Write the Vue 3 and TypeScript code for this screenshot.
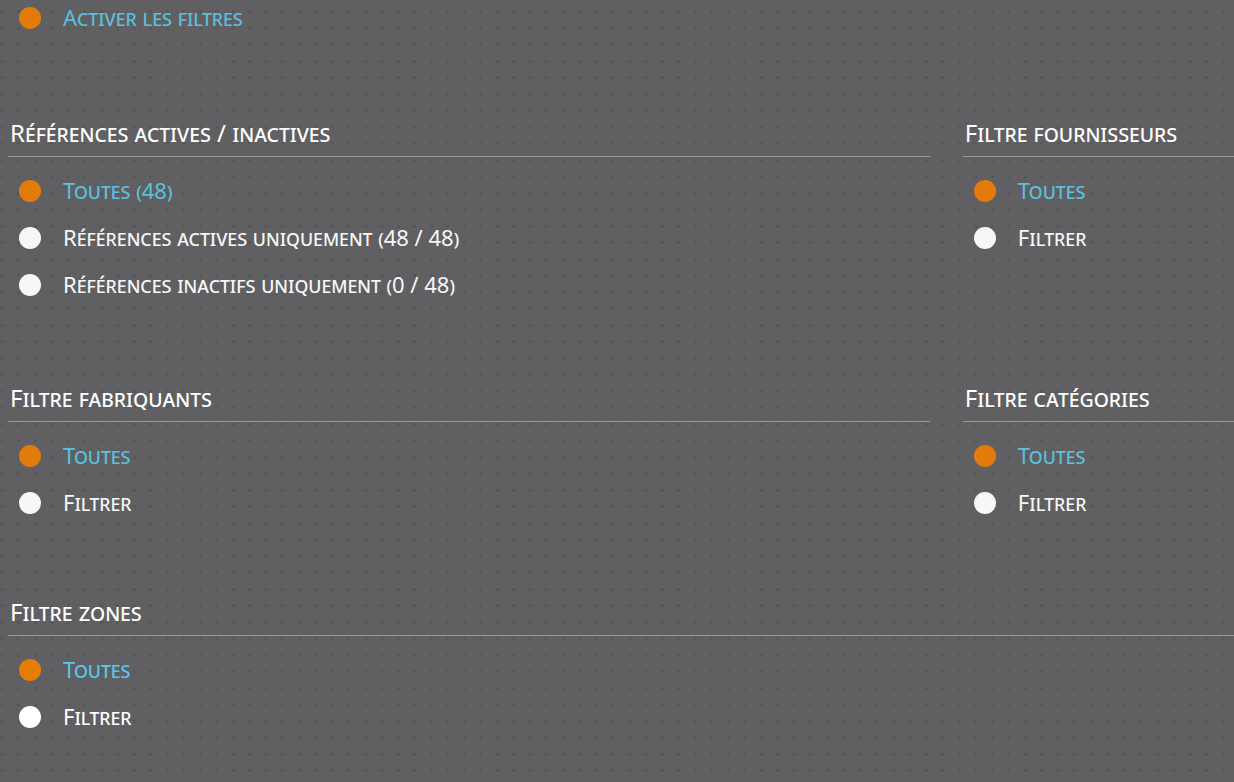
<script setup lang="ts">
import { reactive, ref } from 'vue'

interface FilterGroup {
  id: string
  title: string
  options: string[]
}

const enabled = ref(true)

const groups: FilterGroup[] = [
  {
    id: 'references',
    title: 'Références actives / inactives',
    options: [
      'Toutes (48)',
      'Références actives uniquement (48 / 48)',
      'Références inactifs uniquement (0 / 48)',
    ],
  },
  { id: 'fournisseurs', title: 'Filtre fournisseurs', options: ['Toutes', 'Filtrer'] },
  { id: 'fabriquants', title: 'Filtre fabriquants', options: ['Toutes', 'Filtrer'] },
  { id: 'categories', title: 'Filtre catégories', options: ['Toutes', 'Filtrer'] },
  { id: 'zones', title: 'Filtre zones', options: ['Toutes', 'Filtrer'] },
]

const selected = reactive<Record<string, number>>({
  references: 0,
  fournisseurs: 0,
  fabriquants: 0,
  categories: 0,
  zones: 0,
})
</script>

<template>
  <main class="page">
    <label class="option enable" for="enable">
      <input id="enable" v-model="enabled" class="dot" type="checkbox" />
      <span class="text">Activer les filtres</span>
    </label>
    <div class="groups">
      <section v-for="group in groups" :key="group.id" :class="['group', group.id]">
        <h2 :id="group.id + '-title'" class="title">{{ group.title }}</h2>
        <div class="options" role="radiogroup" :aria-labelledby="group.id + '-title'">
          <label
            v-for="(option, index) in group.options"
            :key="option"
            class="option"
            :for="group.id + '-' + index"
          >
            <input
              :id="group.id + '-' + index"
              v-model="selected[group.id]"
              class="dot"
              type="radio"
              :name="group.id"
              :value="index"
            />
            <span class="text">{{ option }}</span>
          </label>
        </div>
      </section>
    </div>
  </main>
</template>

<style>
body {
  background-color: #606062;
}
</style>

<style scoped>
.page {
  box-sizing: border-box;
  min-height: 100vh;
  padding-left: 8px;
  overflow: hidden;
  background-color: #606062;
  background-image:
    conic-gradient(from 90deg at 30px 30px, #575759 90deg, transparent 0),
    conic-gradient(from 90deg at 30px 30px, #575759 90deg, transparent 0),
    conic-gradient(from 90deg at 30px 30px, #575759 90deg, transparent 0),
    conic-gradient(from 90deg at 30px 30px, #575759 90deg, transparent 0);
  background-size: 33px 33px;
  background-position: 4px 13px, 20px 13px, 4px 30px, 20px 30px;
  font-family: "Noto Sans", "Open Sans", sans-serif;
  font-size: 22px;
  font-variant: small-caps;
  color: #f7f7f7;
}

.groups {
  display: grid;
  grid-template-columns: 17fr 5fr;
  column-gap: 33px;
  padding-top: 77px;
}

.group {
  min-width: 0;
  padding-bottom: 66px;
}

.references {
  padding-bottom: 70px;
}

.zones {
  grid-column: 1 / -1;
  padding-bottom: 0;
}

.title {
  margin: 0 0 10px;
  padding: 0 0 4px 2px;
  border-bottom: 1px solid #9a9a9b;
  font-size: 24px;
  font-weight: 400;
  line-height: 39px;
  white-space: nowrap;
  color: #fff;
}

.option {
  display: flex;
  align-items: center;
  gap: 22px;
  height: 47px;
  padding-left: 11px;
  white-space: nowrap;
}

.text {
  padding-bottom: 2px;
}

.enable {
  height: 36px;
}

.dot {
  appearance: none;
  flex: none;
  width: 22px;
  height: 22px;
  margin: 0;
  border-radius: 50%;
  background: #f7f7f7;
}

.dot:checked {
  background: #e37b0b;
}

.dot:checked + .text {
  color: #5bc0de;
}

.zones .option {
  color: #fff;
}

.zones .dot {
  background: #fff;
}

.zones .dot:checked {
  background: #e97c05;
}

.zones .dot:checked + .text {
  color: #5bc6ec;
}
</style>
